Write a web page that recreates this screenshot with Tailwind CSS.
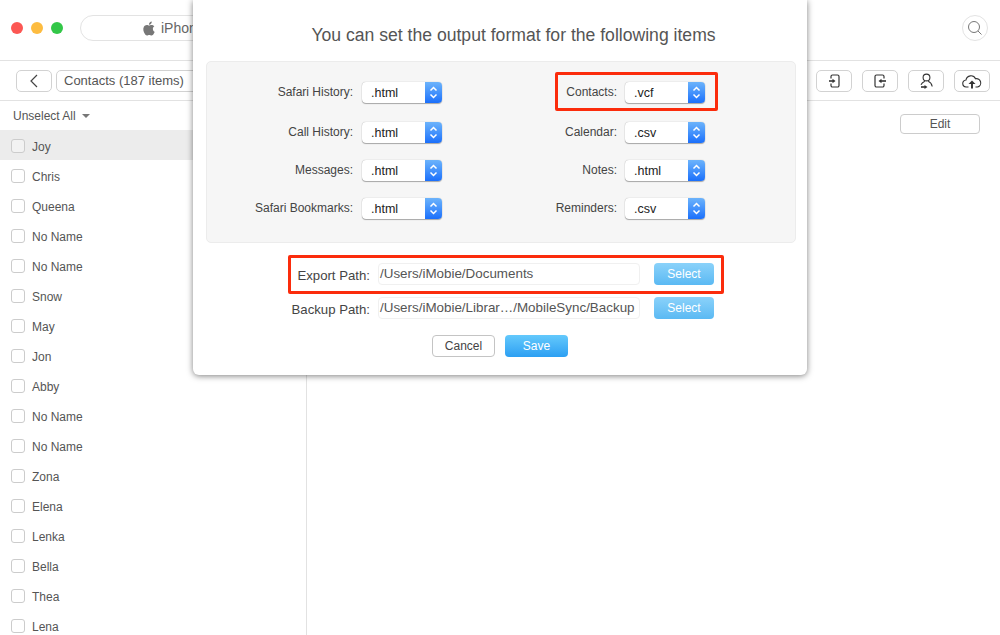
<!DOCTYPE html>
<html>
<head>
<meta charset="utf-8">
<script src="https://cdn.jsdelivr.net/npm/@tailwindcss/browser@4"></script>
</head>
<body class="bg-white">
<div class="relative w-[1000px] h-[635px] overflow-hidden bg-white font-['Liberation_Sans',Arial,sans-serif] text-[#444]">

  <!-- Title bar -->
  <header class="h-[61px] pb-[4px] border-b border-[#e2e2e2] flex items-center pl-[11px] pr-[12px]">
    <div class="flex gap-[8px]">
      <span class="w-[12px] h-[12px] rounded-full bg-[#fc5753]"></span>
      <span class="w-[12px] h-[12px] rounded-full bg-[#fdbc40]"></span>
      <span class="w-[12px] h-[12px] rounded-full bg-[#33c748]"></span>
    </div>
    <div class="ml-[17px] w-[300px] h-[26px] rounded-full border border-[#e3e3e3] flex items-center pl-[61px] gap-[5px] text-[14px] text-[#666]">
      <svg class="w-[14px] h-[15px]" viewBox="0 0 24 24" fill="#777"><path d="M12.152 6.896c-.948 0-2.415-1.078-3.96-1.04-2.04.027-3.91 1.183-4.961 3.014-2.117 3.675-.546 9.103 1.519 12.09 1.013 1.454 2.208 3.09 3.792 3.039 1.52-.065 2.09-.987 3.935-.987 1.831 0 2.35.987 3.96.948 1.637-.026 2.676-1.48 3.676-2.948 1.156-1.688 1.636-3.325 1.662-3.415-.039-.013-3.182-1.221-3.22-4.857-.026-3.04 2.48-4.494 2.597-4.559-1.429-2.09-3.623-2.324-4.39-2.376-2-.156-3.675 1.09-4.61 1.09zM15.53 3.83c.843-1.012 1.4-2.427 1.245-3.83-1.207.052-2.662.805-3.532 1.818-.78.896-1.454 2.338-1.273 3.714 1.338.104 2.715-.688 3.559-1.701"/></svg>
      <span>iPhone</span>
    </div>
    <div class="ml-auto w-[26px] h-[26px] rounded-full border border-[#e3e3e3] flex items-center justify-center">
      <svg class="w-[16px] h-[16px]" viewBox="0 0 16 16" fill="none" stroke="#777" stroke-width="1"><circle cx="7" cy="7" r="5.5"/><path d="M11 11l3.5 3.5"/></svg>
    </div>
  </header>

  <!-- Toolbar -->
  <div class="h-[40px] border-b border-[#e2e2e2] flex items-center pl-[16px] pr-[10px] pt-[1px]">
    <button class="w-[36px] h-[22px] rounded-[5px] border border-[#d2d2d2] flex items-center justify-center">
      <svg class="w-[10px] h-[14px]" viewBox="0 0 10 14" fill="none" stroke="#444" stroke-width="1.2"><path d="M8 1L2 7l6 6"/></svg>
    </button>
    <div class="ml-[4px] w-[180px] h-[22px] rounded-[5px] border border-[#d2d2d2] flex items-center pl-[7px] text-[13px] text-[#555]">Contacts (187 items)</div>
    <div class="ml-auto flex gap-[10px]">
      <button class="w-[36px] h-[22px] rounded-[5px] border border-[#d2d2d2] flex items-center justify-center">
        <svg class="w-[16px] h-[16px]" viewBox="0 0 16 16" fill="none" stroke="#333" stroke-width="1.2"><path d="M5 5.5V3.5A1.5 1.5 0 0 1 6.5 2h5A1.5 1.5 0 0 1 13 3.5v9a1.5 1.5 0 0 1-1.5 1.5h-5A1.5 1.5 0 0 1 5 12.5v-2"/><path d="M3 8h4" stroke-width="1.6"/><path d="M6.5 5.7L9.5 8l-3 2.3z" fill="#333" stroke="none"/></svg>
      </button>
      <button class="w-[36px] h-[22px] rounded-[5px] border border-[#d2d2d2] flex items-center justify-center">
        <svg class="w-[16px] h-[16px]" viewBox="0 0 16 16" fill="none" stroke="#333" stroke-width="1.2"><path d="M12 5.5V3.5A1.5 1.5 0 0 0 10.5 2h-6A1.5 1.5 0 0 0 3 3.5v9A1.5 1.5 0 0 0 4.5 14h6a1.5 1.5 0 0 0 1.5-1.5v-2"/><path d="M14 8H9" stroke-width="1.6"/><path d="M9.5 5.7L6.5 8l3 2.3z" fill="#333" stroke="none"/></svg>
      </button>
      <button class="w-[36px] h-[22px] rounded-[5px] border border-[#d2d2d2] flex items-center justify-center">
        <svg class="w-[16px] h-[16px]" viewBox="0 0 16 16" fill="none" stroke="#333" stroke-width="1.1"><circle cx="8.5" cy="4.5" r="3.4"/><path d="M6.8 8.2C5 9 3.6 10.2 3 11.8M10.2 8.2c2 .8 3.6 2.7 4 5.3"/><path d="M3 14h4" stroke-width="1.6"/><path d="M6.5 12l3 2-3 2z" fill="#333" stroke="none"/></svg>
      </button>
      <button class="w-[36px] h-[22px] rounded-[5px] border border-[#d2d2d2] flex items-center justify-center">
        <svg class="w-[20px] h-[16px]" viewBox="0 0 20 16" fill="none" stroke="#333" stroke-width="1.1"><path d="M6.5 14H4.5A3.5 3.5 0 0 1 4 7 5 5 0 0 1 13.5 5.8 4 4 0 0 1 15.5 14h-2"/><path d="M10 15.5V10" stroke-width="1.9"/><path d="M6.5 11L10 7.5l3.5 3.5z" fill="#333" stroke="none"/></svg>
      </button>
    </div>
  </div>

  <div class="flex h-[534px]">
    <!-- Sidebar -->
    <aside class="w-[307px] shrink-0 border-r border-[#e2e2e2] overflow-hidden text-[12px] text-[#555]">
      <div class="h-[29px] flex items-center pl-[13px] gap-[6px] text-[#555]">
        <span>Unselect All</span>
        <span class="w-0 h-0 border-l-[4px] border-r-[4px] border-t-[4px] border-l-transparent border-r-transparent border-t-[#777]"></span>
      </div>
      <div class="h-[30px] pt-[2px] flex items-center pl-[11px] gap-[7px] bg-[#ececec]"><span class="w-[14px] h-[14px] rounded-[3px] border border-[#ccc] bg-[#f2f2f2]"></span><span class="pt-[1px]">Joy</span></div>
      <div class="h-[30px] pt-[2px] flex items-center pl-[11px] gap-[7px]"><span class="w-[14px] h-[14px] rounded-[3px] border border-[#ccc] bg-white"></span><span class="pt-[1px]">Chris</span></div>
      <div class="h-[30px] pt-[2px] flex items-center pl-[11px] gap-[7px]"><span class="w-[14px] h-[14px] rounded-[3px] border border-[#ccc] bg-white"></span><span class="pt-[1px]">Queena</span></div>
      <div class="h-[30px] pt-[2px] flex items-center pl-[11px] gap-[7px]"><span class="w-[14px] h-[14px] rounded-[3px] border border-[#ccc] bg-white"></span><span class="pt-[1px]">No Name</span></div>
      <div class="h-[30px] pt-[2px] flex items-center pl-[11px] gap-[7px]"><span class="w-[14px] h-[14px] rounded-[3px] border border-[#ccc] bg-white"></span><span class="pt-[1px]">No Name</span></div>
      <div class="h-[30px] pt-[2px] flex items-center pl-[11px] gap-[7px]"><span class="w-[14px] h-[14px] rounded-[3px] border border-[#ccc] bg-white"></span><span class="pt-[1px]">Snow</span></div>
      <div class="h-[30px] pt-[2px] flex items-center pl-[11px] gap-[7px]"><span class="w-[14px] h-[14px] rounded-[3px] border border-[#ccc] bg-white"></span><span class="pt-[1px]">May</span></div>
      <div class="h-[30px] pt-[2px] flex items-center pl-[11px] gap-[7px]"><span class="w-[14px] h-[14px] rounded-[3px] border border-[#ccc] bg-white"></span><span class="pt-[1px]">Jon</span></div>
      <div class="h-[30px] pt-[2px] flex items-center pl-[11px] gap-[7px]"><span class="w-[14px] h-[14px] rounded-[3px] border border-[#ccc] bg-white"></span><span class="pt-[1px]">Abby</span></div>
      <div class="h-[30px] pt-[2px] flex items-center pl-[11px] gap-[7px]"><span class="w-[14px] h-[14px] rounded-[3px] border border-[#ccc] bg-white"></span><span class="pt-[1px]">No Name</span></div>
      <div class="h-[30px] pt-[2px] flex items-center pl-[11px] gap-[7px]"><span class="w-[14px] h-[14px] rounded-[3px] border border-[#ccc] bg-white"></span><span class="pt-[1px]">No Name</span></div>
      <div class="h-[30px] pt-[2px] flex items-center pl-[11px] gap-[7px]"><span class="w-[14px] h-[14px] rounded-[3px] border border-[#ccc] bg-white"></span><span class="pt-[1px]">Zona</span></div>
      <div class="h-[30px] pt-[2px] flex items-center pl-[11px] gap-[7px]"><span class="w-[14px] h-[14px] rounded-[3px] border border-[#ccc] bg-white"></span><span class="pt-[1px]">Elena</span></div>
      <div class="h-[30px] pt-[2px] flex items-center pl-[11px] gap-[7px]"><span class="w-[14px] h-[14px] rounded-[3px] border border-[#ccc] bg-white"></span><span class="pt-[1px]">Lenka</span></div>
      <div class="h-[30px] pt-[2px] flex items-center pl-[11px] gap-[7px]"><span class="w-[14px] h-[14px] rounded-[3px] border border-[#ccc] bg-white"></span><span class="pt-[1px]">Bella</span></div>
      <div class="h-[30px] pt-[2px] flex items-center pl-[11px] gap-[7px]"><span class="w-[14px] h-[14px] rounded-[3px] border border-[#ccc] bg-white"></span><span class="pt-[1px]">Thea</span></div>
      <div class="h-[30px] pt-[2px] flex items-center pl-[11px] gap-[7px]"><span class="w-[14px] h-[14px] rounded-[3px] border border-[#ccc] bg-white"></span><span class="pt-[1px]">Lena</span></div>
    </aside>
    <main class="flex-1 flex justify-end pt-[13px] pr-[20px]">
      <button class="w-[80px] h-[20px] rounded-[4px] border border-[#ccc] text-[12px] text-[#555] flex items-center justify-center">Edit</button>
    </main>
  </div>

  <!-- Modal -->
  <div class="absolute left-[193px] top-0 w-[614px] h-[375px] bg-white rounded-b-[6px] shadow-[0_1px_6px_rgba(0,0,0,0.5)] pl-[13px] pr-[11px]">
    <h1 class="h-[61px] pt-[25px] pl-[25px] text-center text-[17.6px] leading-[21px] text-[#555]">You can set the output format for the following items</h1>

    <div class="h-[182px] rounded-[5px] border border-[#ececec] bg-[#f6f6f6] pt-[19px] text-[12px] text-[#444]">
      <div class="grid grid-cols-2 h-[22px]">
        <div class="flex items-center justify-end w-[235px] gap-[9px]">Safari History:<span class="w-[80px] h-[21px] rounded-[4px] bg-white shadow-[0_1px_1px_rgba(0,0,0,0.3),0_0_1px_rgba(0,0,0,0.35)] flex items-center overflow-hidden text-[12.5px] text-[#222]"><span class="flex-1 pl-[9px] pt-[2px]">.html</span><span class="w-[17px] h-full bg-gradient-to-b from-[#6cb3fb] to-[#1a6ffb] flex items-center justify-center"><svg class="w-[9px] h-[15px]" viewBox="0 0 9 15" fill="none" stroke="#fff" stroke-width="1.5"><path d="M1.5 5.5L4.5 2.5l3 3M1.5 9.5l3 3 3-3"/></svg></span></span></div>
        <div class="flex items-center justify-end w-[204px] gap-[8px]">Contacts:<span class="w-[80px] h-[21px] rounded-[4px] bg-white shadow-[0_1px_1px_rgba(0,0,0,0.3),0_0_1px_rgba(0,0,0,0.35)] flex items-center overflow-hidden text-[12.5px] text-[#222]"><span class="flex-1 pl-[9px] pt-[2px]">.vcf</span><span class="w-[17px] h-full bg-gradient-to-b from-[#6cb3fb] to-[#1a6ffb] flex items-center justify-center"><svg class="w-[9px] h-[15px]" viewBox="0 0 9 15" fill="none" stroke="#fff" stroke-width="1.5"><path d="M1.5 5.5L4.5 2.5l3 3M1.5 9.5l3 3 3-3"/></svg></span></span></div>
      </div>
      <div class="grid grid-cols-2 h-[22px] mt-[18px]">
        <div class="flex items-center justify-end w-[235px] gap-[9px]">Call History:<span class="w-[80px] h-[21px] rounded-[4px] bg-white shadow-[0_1px_1px_rgba(0,0,0,0.3),0_0_1px_rgba(0,0,0,0.35)] flex items-center overflow-hidden text-[12.5px] text-[#222]"><span class="flex-1 pl-[9px] pt-[2px]">.html</span><span class="w-[17px] h-full bg-gradient-to-b from-[#6cb3fb] to-[#1a6ffb] flex items-center justify-center"><svg class="w-[9px] h-[15px]" viewBox="0 0 9 15" fill="none" stroke="#fff" stroke-width="1.5"><path d="M1.5 5.5L4.5 2.5l3 3M1.5 9.5l3 3 3-3"/></svg></span></span></div>
        <div class="flex items-center justify-end w-[204px] gap-[8px]">Calendar:<span class="w-[80px] h-[21px] rounded-[4px] bg-white shadow-[0_1px_1px_rgba(0,0,0,0.3),0_0_1px_rgba(0,0,0,0.35)] flex items-center overflow-hidden text-[12.5px] text-[#222]"><span class="flex-1 pl-[9px] pt-[2px]">.csv</span><span class="w-[17px] h-full bg-gradient-to-b from-[#6cb3fb] to-[#1a6ffb] flex items-center justify-center"><svg class="w-[9px] h-[15px]" viewBox="0 0 9 15" fill="none" stroke="#fff" stroke-width="1.5"><path d="M1.5 5.5L4.5 2.5l3 3M1.5 9.5l3 3 3-3"/></svg></span></span></div>
      </div>
      <div class="grid grid-cols-2 h-[22px] mt-[16px]">
        <div class="flex items-center justify-end w-[235px] gap-[9px]">Messages:<span class="w-[80px] h-[21px] rounded-[4px] bg-white shadow-[0_1px_1px_rgba(0,0,0,0.3),0_0_1px_rgba(0,0,0,0.35)] flex items-center overflow-hidden text-[12.5px] text-[#222]"><span class="flex-1 pl-[9px] pt-[2px]">.html</span><span class="w-[17px] h-full bg-gradient-to-b from-[#6cb3fb] to-[#1a6ffb] flex items-center justify-center"><svg class="w-[9px] h-[15px]" viewBox="0 0 9 15" fill="none" stroke="#fff" stroke-width="1.5"><path d="M1.5 5.5L4.5 2.5l3 3M1.5 9.5l3 3 3-3"/></svg></span></span></div>
        <div class="flex items-center justify-end w-[204px] gap-[8px]">Notes:<span class="w-[80px] h-[21px] rounded-[4px] bg-white shadow-[0_1px_1px_rgba(0,0,0,0.3),0_0_1px_rgba(0,0,0,0.35)] flex items-center overflow-hidden text-[12.5px] text-[#222]"><span class="flex-1 pl-[9px] pt-[2px]">.html</span><span class="w-[17px] h-full bg-gradient-to-b from-[#6cb3fb] to-[#1a6ffb] flex items-center justify-center"><svg class="w-[9px] h-[15px]" viewBox="0 0 9 15" fill="none" stroke="#fff" stroke-width="1.5"><path d="M1.5 5.5L4.5 2.5l3 3M1.5 9.5l3 3 3-3"/></svg></span></span></div>
      </div>
      <div class="grid grid-cols-2 h-[22px] mt-[16px]">
        <div class="flex items-center justify-end w-[235px] gap-[9px]">Safari Bookmarks:<span class="w-[80px] h-[21px] rounded-[4px] bg-white shadow-[0_1px_1px_rgba(0,0,0,0.3),0_0_1px_rgba(0,0,0,0.35)] flex items-center overflow-hidden text-[12.5px] text-[#222]"><span class="flex-1 pl-[9px] pt-[2px]">.html</span><span class="w-[17px] h-full bg-gradient-to-b from-[#6cb3fb] to-[#1a6ffb] flex items-center justify-center"><svg class="w-[9px] h-[15px]" viewBox="0 0 9 15" fill="none" stroke="#fff" stroke-width="1.5"><path d="M1.5 5.5L4.5 2.5l3 3M1.5 9.5l3 3 3-3"/></svg></span></span></div>
        <div class="flex items-center justify-end w-[204px] gap-[8px]">Reminders:<span class="w-[80px] h-[21px] rounded-[4px] bg-white shadow-[0_1px_1px_rgba(0,0,0,0.3),0_0_1px_rgba(0,0,0,0.35)] flex items-center overflow-hidden text-[12.5px] text-[#222]"><span class="flex-1 pl-[9px] pt-[2px]">.csv</span><span class="w-[17px] h-full bg-gradient-to-b from-[#6cb3fb] to-[#1a6ffb] flex items-center justify-center"><svg class="w-[9px] h-[15px]" viewBox="0 0 9 15" fill="none" stroke="#fff" stroke-width="1.5"><path d="M1.5 5.5L4.5 2.5l3 3M1.5 9.5l3 3 3-3"/></svg></span></span></div>
      </div>
    </div>

    <div class="mt-[20px] flex items-center h-[22px] text-[13.2px]">
      <span class="w-[164px] text-right text-[#444] pt-[3px]">Export Path:</span>
      <span class="ml-[8px] w-[262px] h-[22px] rounded-[4px] border border-[#f0f0f0] pl-[1px] pt-[1px] flex items-center text-[13.4px] text-[#555] whitespace-nowrap">/Users/iMobie/Documents</span>
      <span class="ml-[14px] w-[60px] h-[22px] rounded-[4px] bg-gradient-to-b from-[#8ad2fa] to-[#5ab9f3] text-white text-[12px] flex items-center justify-center">Select</span>
    </div>
    <div class="mt-[12px] flex items-center h-[22px] text-[13.2px]">
      <span class="w-[164px] text-right text-[#444] pt-[3px]">Backup Path:</span>
      <span class="ml-[8px] w-[262px] h-[22px] rounded-[4px] border border-[#f0f0f0] pl-[1px] pt-[1px] flex items-center text-[13.4px] text-[#555] whitespace-nowrap">/Users/iMobie/Librar…/MobileSync/Backup</span>
      <span class="ml-[14px] w-[60px] h-[22px] rounded-[4px] bg-gradient-to-b from-[#8ad2fa] to-[#5ab9f3] text-white text-[12px] flex items-center justify-center">Select</span>
    </div>
    <div class="mt-[16px] flex justify-center gap-[10px] text-[12px] pr-[2px]">
      <button class="w-[63px] h-[22px] rounded-[4px] border border-[#c4c4c4] text-[#444]">Cancel</button>
      <button class="w-[63px] h-[22px] rounded-[4px] bg-gradient-to-b from-[#63c9fc] to-[#2b9ff2] text-white">Save</button>
    </div>

    <!-- Red callouts -->
    <div class="absolute left-[362px] top-[72px] w-[163px] h-[39px] border-[3px] border-[#fb2c0c] rounded-[2px]"></div>
    <div class="absolute left-[95px] top-[255px] w-[436px] h-[39px] border-[3px] border-[#fb2c0c] rounded-[2px]"></div>
  </div>
</div>
</body>
</html>
